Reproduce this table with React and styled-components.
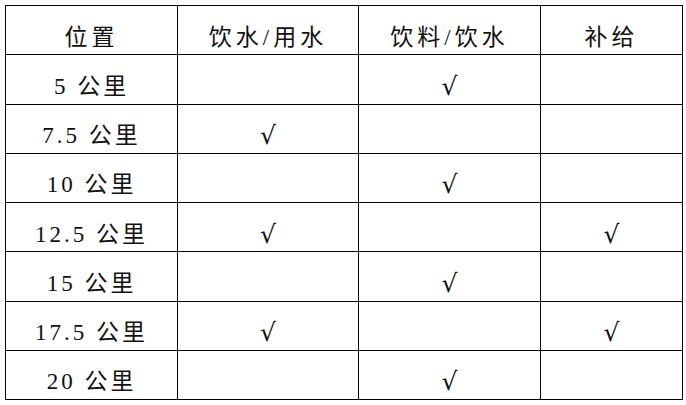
import React from 'react'
import styled, { createGlobalStyle } from 'styled-components'

const GlobalStyle = createGlobalStyle`
  html, body {
    margin: 0;
    padding: 0;
    background: #fff;
  }
  body {
    font-family: "Liberation Serif", "Noto Sans CJK SC", serif;
    color: #111;
  }
`

const Page = styled.div`
  padding: 5px 0 0 5px;
`

const Table = styled.table`
  border-collapse: collapse;
  table-layout: fixed;
  width: 677px;
`

const Cell = styled.td`
  border: 1px solid #000;
  height: 49.25px;
  padding: 14px 0 0 0;
  box-sizing: border-box;
  text-align: center;
  vertical-align: middle;
  font-size: 23px;
  letter-spacing: ${(p) => (p.$head ? '4px' : '3px')};
  font-weight: 400;
  line-height: 1;
  white-space: nowrap;
`

const Check = styled.span`
  font-family: "DejaVu Sans", "Noto Sans CJK SC", sans-serif;
  font-size: 25px;
  letter-spacing: 0;
`

const headers = ['位置', '饮水/用水', '饮料/饮水', '补给']
const widths = [172, 181, 182, 142]

const rows = [
  ['5 公里', false, true, false],
  ['7.5 公里', true, false, false],
  ['10 公里', false, true, false],
  ['12.5 公里', true, false, true],
  ['15 公里', false, true, false],
  ['17.5 公里', true, false, true],
  ['20 公里', false, true, false],
]

export default function App() {
  return (
    <>
      <GlobalStyle />
      <Page>
        <Table>
          <colgroup>
            {widths.map((w, i) => (
              <col key={i} style={{ width: w }} />
            ))}
          </colgroup>
          <tbody>
            <tr>
              {headers.map((h) => (
                <Cell key={h} $head>
                  {h}
                </Cell>
              ))}
            </tr>
            {rows.map(([place, ...marks]) => (
              <tr key={place}>
                <Cell>{place}</Cell>
                {marks.map((m, i) => (
                  <Cell key={i}>{m && <Check>√</Check>}</Cell>
                ))}
              </tr>
            ))}
          </tbody>
        </Table>
      </Page>
    </>
  )
}
